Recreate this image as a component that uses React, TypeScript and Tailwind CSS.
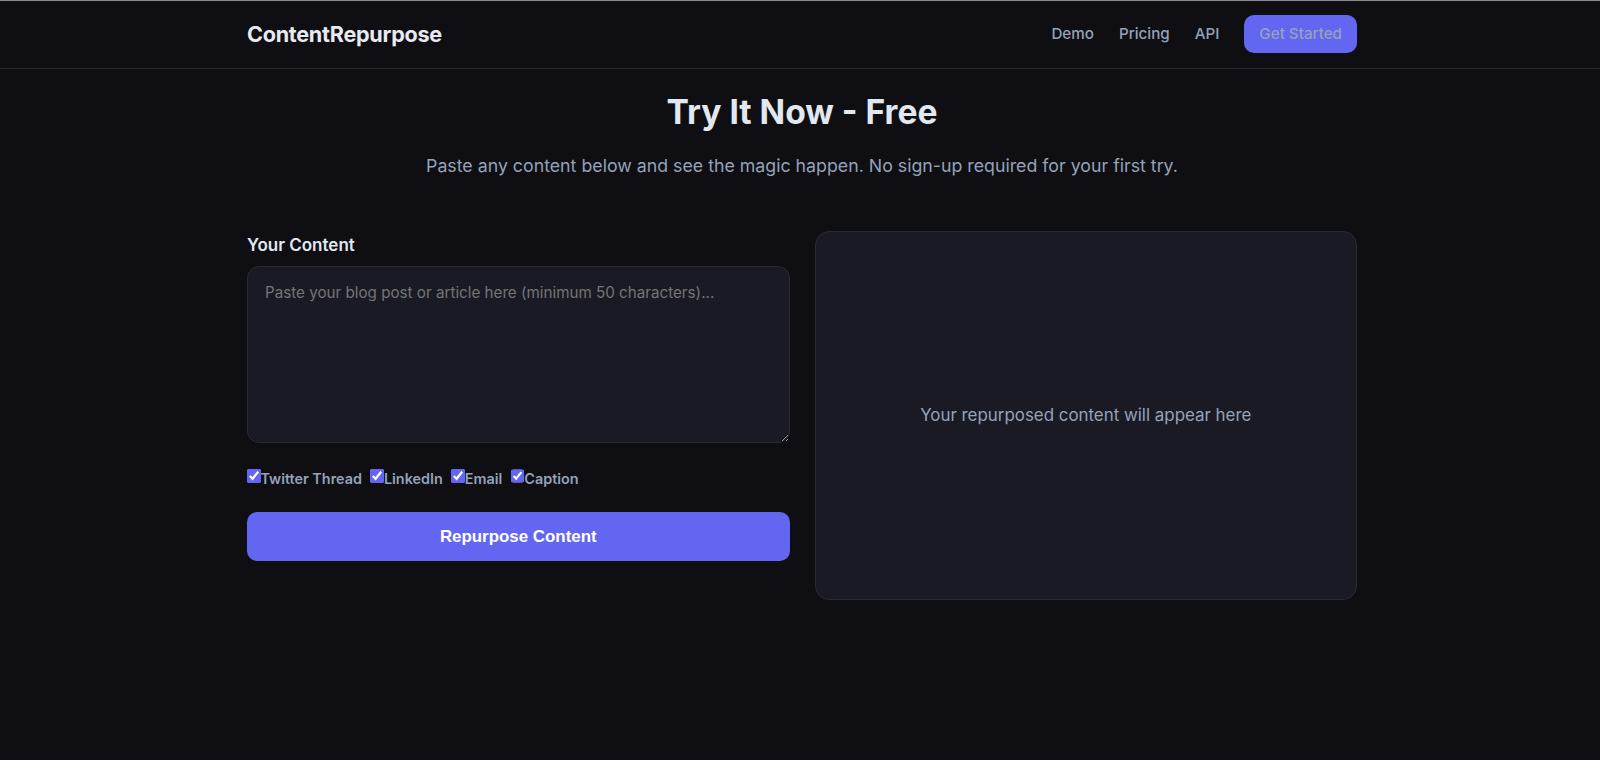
import { useState } from "react";

const outputs = ["Twitter Thread", "LinkedIn", "Email", "Caption"];
const inter = "font-['Inter','Noto_Sans',sans-serif]";

export default function App() {
  const [text, setText] = useState("");

  return (
    <div className={`h-[760px] overflow-hidden bg-[#0e0e13] ${inter}`}>
      <div className="h-px bg-[#8b8c90]" />
      <header className="border-b border-[#2a2a35]">
        <div className="ml-[247px] flex h-[67px] w-[1110px] items-center justify-between">
          <div className="text-[21.6px] font-bold tracking-[-0.27px] text-[#e8eaf0]">ContentRepurpose</div>
          <nav className="flex items-center gap-[25px] text-[15.2px] font-medium text-[#94a3b8]">
            <a>Demo</a>
            <a>Pricing</a>
            <a>API</a>
            <a className="mb-[2px] flex h-[38px] items-center rounded-[10px] bg-[#6366f1] px-[15px] pt-[2px] text-[#94a3b8]">Get Started</a>
          </nav>
        </div>
      </header>

      <main className="ml-[247px] w-[1110px]">
        <h1 className="mt-[19px] text-center text-[33.6px] leading-[48px] font-bold text-[#e2e8f0]">Try It Now - Free</h1>
        <p className="mt-[16px] text-center text-[17.75px] leading-[28px] text-[#94a3b8]">
          Paste any content below and see the magic happen. No sign-up required for your first try.
        </p>

        <div className="mt-[51px] grid grid-cols-2 gap-[25px]">
          <div className="pt-[2px]">
            <label className="block text-[17px] leading-[24px] font-semibold text-[#e2e8f0]">Your Content</label>
            <textarea
              value={text}
              onChange={(e) => setText(e.target.value)}
              placeholder="Paste your blog post or article here (minimum 50 characters)..."
              className="mt-[9px] block h-[177px] w-full rounded-[12px] border border-[#2a2a35] bg-[#1a1a24] px-[17px] py-[17px] text-[15.2px] leading-[18px] text-[#e2e8f0] outline-none placeholder:text-[#757575]"
            />
            <div className="mt-[25px] flex gap-[8.5px]">
              {outputs.map((name) => (
                <label key={name} className="flex items-start text-[14.4px] leading-[21px] font-semibold text-[#94a3b8]">
                  <input type="checkbox" defaultChecked className="mt-[1px] h-[14px] w-[13.5px] accent-[#6366f1]" />
                  {name}
                </label>
              ))}
            </div>
            <button className="mt-[23px] block h-[49px] w-full rounded-[10px] bg-[#6366f1] font-['Liberation_Sans',sans-serif] text-[16.9px] font-bold text-white">
              Repurpose Content
            </button>
          </div>

          <div className="flex h-[369px] items-center justify-center rounded-[14px] border border-[#2a2a35] bg-[#1a1a24] text-[16.9px] text-[#94a3b8]">
            Your repurposed content will appear here
          </div>
        </div>
      </main>
    </div>
  );
}
